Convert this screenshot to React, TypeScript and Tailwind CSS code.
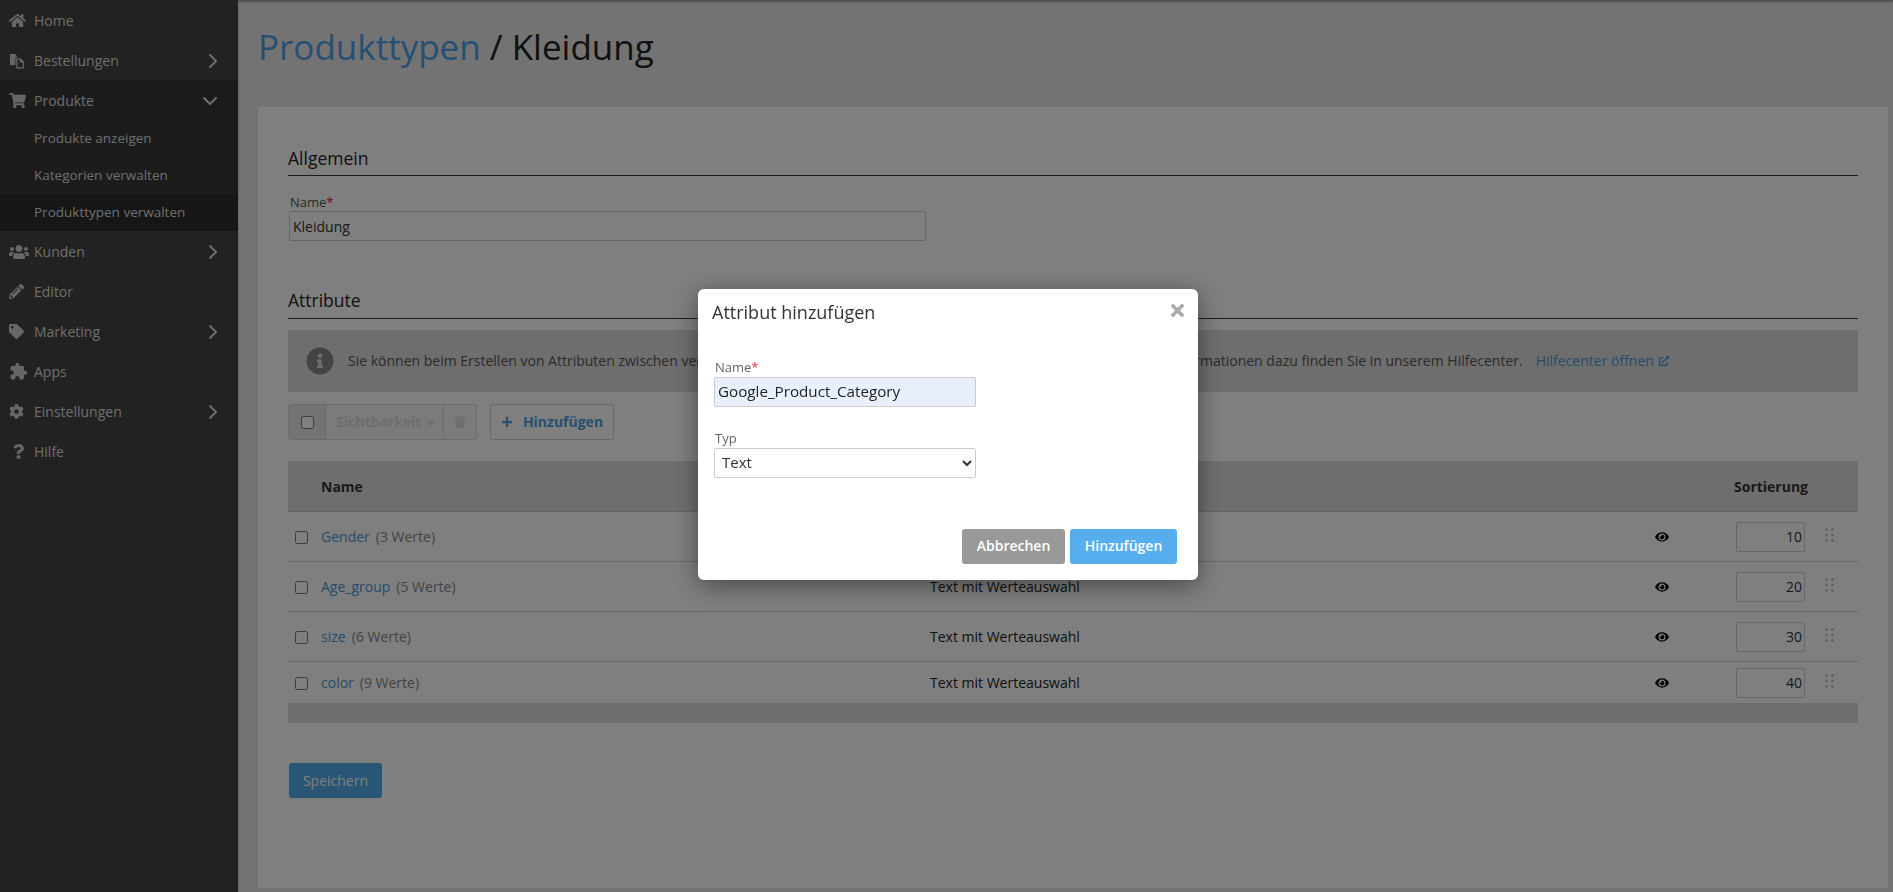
import { ChevronDown, ChevronRight } from 'lucide-react';
import {
  FaCog,
  FaExternalLinkAlt,
  FaEye,
  FaHome,
  FaInfoCircle,
  FaPencilAlt,
  FaPlus,
  FaQuestion,
  FaShoppingCart,
  FaTag,
  FaTimes,
  FaTrash,
  FaUsers,
} from 'react-icons/fa';
import { MdExtension } from 'react-icons/md';
import type { ReactNode } from 'react';

function FilesIcon() {
  return (
    <svg width="16" height="16" viewBox="0 0 16 16" className="fill-current">
      <path d="M1 1h5l2 2v1.5H6.5V12H1z" />
      <path d="M7.2 5.2h4.6l3.2 3.2v7.1H7.2zM8.4 6.4v7.9h5.4V9.4h-3V6.4z" />
    </svg>
  );
}

function NavItem({ icon, label, arrow, open }: { icon: ReactNode; label: string; arrow?: boolean; open?: boolean }) {
  return (
    <div className="flex h-10 items-center pl-[9px] pr-[13px] pt-[1px] text-sm text-[#ddd]">
      <span className="flex w-[25px] justify-start text-[#ccc]">{icon}</span>
      <span className="flex-1">{label}</span>
      {open ? <ChevronDown size={24} className="mr-[3px]" /> : arrow ? <ChevronRight size={24} /> : null}
    </div>
  );
}

function Sidebar() {
  return (
    <aside className="w-[238px] shrink-0 bg-[#444]">
      <NavItem icon={<FaHome size={17} />} label="Home" />
      <NavItem icon={<FilesIcon />} label="Bestellungen" arrow />
      <div className="bg-[#383838]">
        <NavItem icon={<FaShoppingCart size={17} />} label="Produkte" open />
        <div className="flex h-[37px] items-center pl-[34px] text-[13.5px] text-[#ddd]">Produkte anzeigen</div>
        <div className="flex h-[37px] items-center pl-[34px] text-[13.5px] text-[#ddd]">Kategorien verwalten</div>
        <div className="flex h-[37px] items-center bg-[#2c2c2c] pl-[34px] text-[13.5px] text-[#ddd]">Produkttypen verwalten</div>
      </div>
      <NavItem icon={<FaUsers size={20} />} label="Kunden" arrow />
      <NavItem icon={<FaPencilAlt size={15} />} label="Editor" />
      <NavItem icon={<FaTag size={15} />} label="Marketing" arrow />
      <NavItem icon={<MdExtension size={19} />} label="Apps" />
      <NavItem icon={<FaCog size={15} />} label="Einstellungen" arrow />
      <NavItem icon={<FaQuestion size={15} className="ml-[2px]" />} label="Hilfe" />
    </aside>
  );
}

function GripDots() {
  return (
    <svg width="9" height="14" viewBox="0 0 9 14" className="fill-[#bbb]">
      <circle cx="1.5" cy="1.5" r="1.3" />
      <circle cx="7.5" cy="1.5" r="1.3" />
      <circle cx="1.5" cy="7" r="1.3" />
      <circle cx="7.5" cy="7" r="1.3" />
      <circle cx="1.5" cy="12.5" r="1.3" />
      <circle cx="7.5" cy="12.5" r="1.3" />
    </svg>
  );
}

const attributes = [
  { name: 'Gender', count: '(3 Werte)', type: 'Text mit Werteauswahl', sort: '10', height: 'h-[50px]' },
  { name: 'Age_group', count: '(5 Werte)', type: 'Text mit Werteauswahl', sort: '20', height: 'h-[50px]' },
  { name: 'size', count: '(6 Werte)', type: 'Text mit Werteauswahl', sort: '30', height: 'h-[50px]' },
  { name: 'color', count: '(9 Werte)', type: 'Text mit Werteauswahl', sort: '40', height: 'h-[41px]' },
];

function AttributeTable() {
  return (
    <div className="mt-[21px]">
      <div className="grid h-[51px] grid-cols-[33px_609px_724px_82px_69px_53px] items-center border-b border-[#ccc] bg-[#ddd] pt-[1px] text-sm font-bold text-[#333]">
        <span />
        <span>Name</span>
        <span>Typ</span>
        <span />
        <span className="-ml-[2px] whitespace-nowrap">Sortierung</span>
        <span />
      </div>
      {attributes.map((attr, i) => (
        <div
          key={attr.name}
          className={`grid ${attr.height} grid-cols-[33px_609px_724px_82px_69px_53px] items-center text-sm ${i < 3 ? 'border-b border-[#ccc]' : ''}`}
        >
          <input type="checkbox" className="ml-[7px] mt-[2px] h-[13px] w-[13px]" />
          <span>
            <a className="text-[#4f97d4]">{attr.name}</a>
            <span className="ml-[6px] text-[#888]">{attr.count}</span>
          </span>
          <span className="text-[#222]">{attr.type}</span>
          <FaEye size={14} className="ml-[1px] mt-[1px] text-black" />
          <input
            type="text"
            defaultValue={attr.sort}
            className="h-[30px] w-[69px] rounded-[2px] border border-[#ccc] pr-[2px] text-right text-sm text-[#333]"
          />
          <span className="-mt-[3px] ml-[20px]">
            <GripDots />
          </span>
        </div>
      ))}
      <div className="h-5 bg-[#ddd]" />
    </div>
  );
}

function Modal() {
  return (
    <div className="fixed inset-0 flex items-start justify-center bg-black/50 pl-[3px] pt-[289px]">
      <div className="h-[291px] w-[500px] rounded-[6px] bg-white px-4 shadow-[0_5px_25px_rgba(0,0,0,0.45)]">
        <div className="flex items-center justify-between pt-[9px]">
          <h3 className="-ml-[2px] text-lg text-[#333]">Attribut hinzufügen</h3>
          <FaTimes size={19} className="-mr-[5px] -mt-[4px] text-[#aaa]" />
        </div>
        <label className="mt-[33px] block pl-[1px] text-[13px] leading-4 text-[#666]">
          Name<span className="text-red-500">*</span>
        </label>
        <input
          type="text"
          defaultValue="Google_Product_Category"
          className="mt-[2px] block h-[30px] w-[262px] rounded-[2px] border border-[#ccc] bg-[#e8f0fe] pb-[2px] pl-[3px] text-[15.2px] text-[#222]"
        />
        <label className="mt-[23px] block pl-[1px] text-[13px] leading-4 text-[#666]">Typ</label>
        <select className="mt-[2px] block h-[30px] w-[262px] rounded-[2px] border border-[#ccc] bg-white pb-[2px] pl-[3px] text-[15px] text-[#333]">
          <option>Text</option>
        </select>
        <div className="mt-[51px] flex justify-end gap-[5px] pr-[5px]">
          <button className="h-[35px] w-[103px] rounded-[3px] bg-[#999] pb-[1px] text-sm font-semibold text-white">Abbrechen</button>
          <button className="h-[35px] w-[107px] rounded-[3px] bg-[#56aeee] pb-[1px] text-sm font-semibold text-white">Hinzufügen</button>
        </div>
      </div>
    </div>
  );
}

export default function App() {
  return (
    <div className="flex h-[892px] overflow-hidden font-['Open_Sans',sans-serif] text-[#333]">
      <Sidebar />
      <main className="flex-1 bg-[#e6e6e6] pl-5 pr-[6px] shadow-[inset_0_2px_2px_rgba(0,0,0,0.3)]">
        <h1 className="flex h-[107px] items-center pb-[13px] text-[35px] text-[#222]">
          <span className="text-[#4aa0e8]">Produkttypen</span>
          <span className="ml-[9px]">/ Kleidung</span>
        </h1>
        <div className="h-[781px] bg-white px-[30px] pt-[39px]">
          <h2 className="border-b border-[#333] pb-[5px] text-[17.5px] leading-[24px] text-[#222]">Allgemein</h2>
          <label className="mt-[18px] block pl-[2px] text-[13px] leading-4 text-[#555]">
            Name<span className="text-red-600">*</span>
          </label>
          <input
            type="text"
            defaultValue="Kleidung"
            className="ml-[1px] mt-[1px] block h-[30px] w-[637px] rounded-[2px] border border-[#ccc] pl-[3px] text-sm text-[#333]"
          />
          <h2 className="mt-[47px] border-b border-[#333] pb-[6px] text-[17.5px] leading-[24px] text-[#222]">Attribute</h2>

          <div className="mt-[11px] flex h-[62px] items-center bg-[#ddd] pl-[18px] text-sm text-[#555]">
            <FaInfoCircle size={28} className="mr-[14px] shrink-0 text-[#888]" />
            <span className="whitespace-nowrap">
              Sie können beim Erstellen von Attributen zwischen verschiedenen Attributtypen wie Text oder Werteauswahl wählen. Weitere Informationen dazu finden Sie in unserem Hilfecenter.
            </span>
            <a className="ml-[13px] flex items-center gap-[5px] text-[#4f97d4]">
              Hilfecenter öffnen <FaExternalLinkAlt size={10} />
            </a>
          </div>

          <div className="mt-3 flex">
            <div className="flex h-[36px] items-stretch rounded-[3px] border border-[#d8d8d8] bg-[#f6f6f6]">
              <div className="flex w-[36px] items-center justify-center bg-[#e6e6e6]">
                <input type="checkbox" className="h-[13px] w-[13px]" />
              </div>
              <div className="flex w-[119px] items-center gap-[5px] border-x border-[#d8d8d8] pl-[10px] text-sm font-bold text-[#dcdcdc]">
                Sichtbarkeit
                <span className="mt-[2px] border-x-[5px] border-t-[5px] border-x-transparent border-t-[#dcdcdc]" />
              </div>
              <div className="flex w-[32px] items-center justify-center text-[#dcdcdc]">
                <FaTrash size={12} />
              </div>
            </div>
            <button className="ml-[13px] flex h-[36px] w-[124px] items-center justify-center gap-[10px] rounded-[3px] border border-[#ccc] bg-white text-sm font-bold text-[#4f9fe0]">
              <FaPlus size={12} />
              Hinzufügen
            </button>
          </div>

          <AttributeTable />

          <button className="ml-[1px] mt-[40px] block h-[35px] w-[93px] rounded-[3px] bg-[#52ace8] text-sm text-white">Speichern</button>
        </div>
      </main>
      <Modal />
    </div>
  );
}
